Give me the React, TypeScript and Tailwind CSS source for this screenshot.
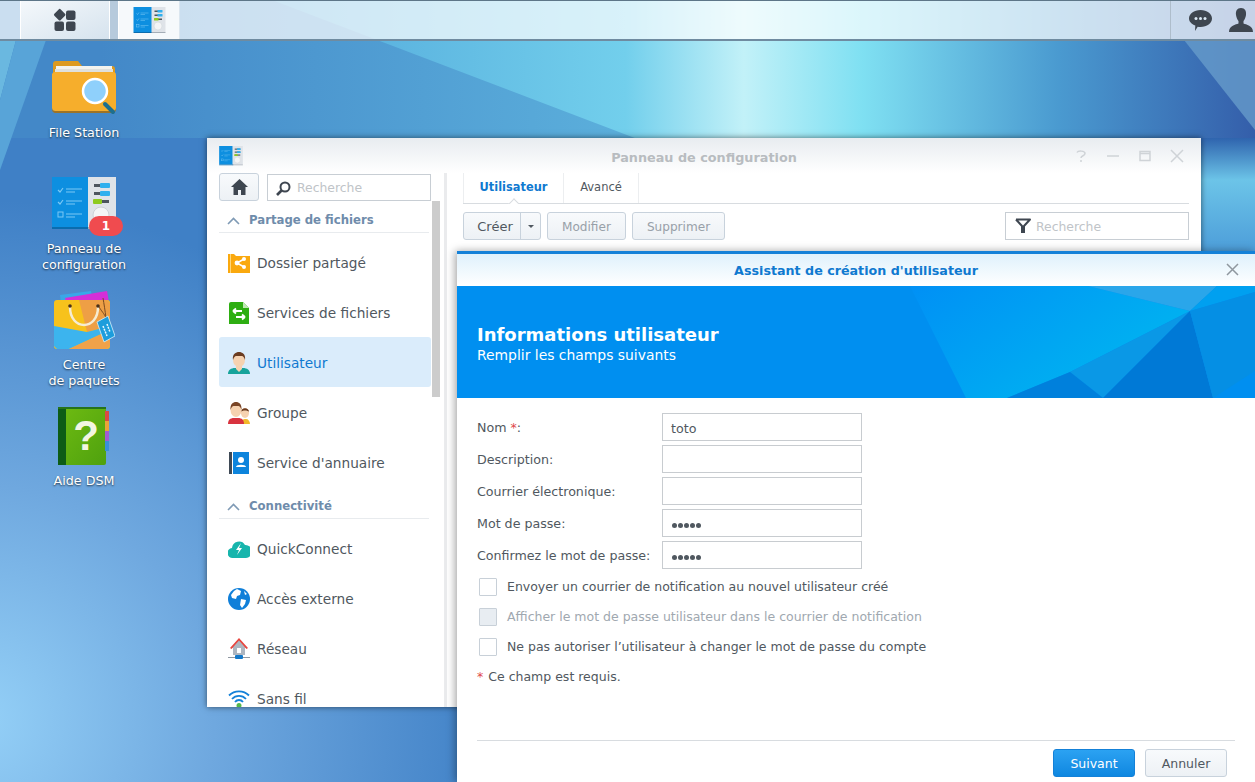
import type { FC, ReactNode } from "react";

const Wallpaper: FC = () => (
  <svg className="absolute inset-0 w-full h-full" viewBox="0 0 1255 782" preserveAspectRatio="none">
    <defs>
      <radialGradient id="wpLeft" gradientUnits="userSpaceOnUse" cx="-20" cy="720" r="520">
        <stop offset="0" stopColor="#94d0f7" />
        <stop offset="0.45" stopColor="#6fa8df" />
        <stop offset="1" stopColor="#3f80c6" />
      </radialGradient>
      <linearGradient id="wpRight" x1="0" y1="0" x2="0" y2="1">
        <stop offset="0" stopColor="#2f64ae" />
        <stop offset="0.35" stopColor="#6cc4e8" />
        <stop offset="1" stopColor="#4a9ad8" />
      </linearGradient>
      <linearGradient id="wpSky" gradientUnits="userSpaceOnUse" x1="272" y1="0" x2="1255" y2="0">
        <stop offset="0" stopColor="#52a8da" />
        <stop offset="0.36" stopColor="#72cfec" />
        <stop offset="0.48" stopColor="#c2f1f8" />
        <stop offset="0.6" stopColor="#7fe0f2" />
        <stop offset="0.8" stopColor="#4a9ad0" />
        <stop offset="1" stopColor="#345eaa" />
      </linearGradient>
      <linearGradient id="wpTop" gradientUnits="userSpaceOnUse" x1="100" y1="0" x2="640" y2="0">
        <stop offset="0" stopColor="#4388c8" />
        <stop offset="1" stopColor="#5cb0dc" />
      </linearGradient>
    </defs>
    <rect width="1255" height="782" fill="url(#wpLeft)" />
    <rect x="0" y="0" width="1255" height="138" fill="url(#wpTop)" />
    <polygon points="272,0 640,140 1255,140 1255,0" fill="url(#wpSky)" />
    <polygon points="0,40 16,40 0,100" fill="#6ab8e0" />
    <polygon points="16,40 46,40 0,170 0,100" fill="#58a4d8" />
    <polygon points="1184,40 1255,40 1255,130" fill="#6a9fcc" opacity="0.75" />
    <rect x="1201" y="138" width="54" height="120" fill="url(#wpRight)" />
  </svg>
);

const DashIcon: FC = () => (
  <svg width="24" height="24" viewBox="0 0 24 24" fill="#3e4650">
    <rect x="2.2" y="2.2" width="9" height="9" rx="1.5" transform="rotate(45 6.7 6.7)" />
    <rect x="13" y="2.5" width="9.5" height="9.5" rx="2" />
    <rect x="1.5" y="13.5" width="9.5" height="9.5" rx="2" />
    <rect x="13" y="13.5" width="9.5" height="9.5" rx="2" />
  </svg>
);

const PanelIcon: FC<{ w: number; h: number }> = ({ w, h }) => (
  <svg width={w} height={h} viewBox="0 0 64 54">
    <rect x="0" y="0" width="38" height="50" fill="#0d8fe0" />
    <rect x="36" y="0" width="28" height="50" fill="#dfe3e8" />
    <rect x="0" y="50" width="38" height="2" fill="#0a6cae" />
    <rect x="36" y="50" width="28" height="2" fill="#a4adb6" />
    <path d="M6 13l2 2 3-4M6 25l2 2 3-4" stroke="#7cc8f4" strokeWidth="1.2" fill="none" />
    <rect x="6" y="35" width="5" height="5" fill="none" stroke="#7cc8f4" strokeWidth="1" />
    <path d="M14 12h16M14 15h9M14 24h16M14 27h9M14 37h16M14 40h9" stroke="#7cc8f4" strokeWidth="1" />
    <rect x="42" y="7" width="15" height="3" fill="#4d555e" />
    <rect x="48" y="6" width="10" height="5" rx="1" fill="#2fb0ee" />
    <rect x="42" y="15" width="15" height="3" fill="#4d555e" />
    <rect x="48" y="14" width="10" height="5" rx="1" fill="#2fb0ee" />
    <rect x="42" y="23" width="15" height="3" fill="#4d555e" />
    <rect x="41" y="22" width="9" height="5" rx="1" fill="#8ecb1e" />
    <circle cx="49" cy="38" r="8" fill="#f4f5f6" stroke="#cdd2d7" />
  </svg>
);

const FolderIcon: FC = () => (
  <svg width="64" height="58" viewBox="0 0 64 58">
    <path d="M1 5a3 3 0 0 1 3-3h22l4 5h30a3 3 0 0 1 3 3v16H1z" fill="#dd9a1f" />
    <rect x="4" y="7" width="56" height="4" fill="#f3f3ee" />
    <rect x="3" y="10" width="58" height="5" fill="#dfe0dc" />
    <path d="M0 15a3 3 0 0 1 3-2l58 0a3 3 0 0 1 3 3v33a3 3 0 0 1-3 3H3a3 3 0 0 1-3-3z" fill="#f6ae2c" />
    <path d="M0 49a3 3 0 0 0 3 3h58a3 3 0 0 0 3-3v1a4 4 0 0 1-3 4H3a4 4 0 0 1-3-4z" fill="#9c7326" />
    <path d="M53 45l8 8" stroke="#1d6f8f" strokeWidth="4" strokeLinecap="round" />
    <circle cx="43" cy="32" r="12" fill="#8fd0fb" stroke="#fff" strokeWidth="2.5" />
  </svg>
);

const BagIcon: FC = () => (
  <svg width="62" height="60" viewBox="0 0 62 60">
    <polygon points="7,5 38,1 40,12 8,14" fill="#3aa7e8" />
    <polygon points="12,8 54,1 56,12 14,14" fill="#d52fd8" />
    <rect x="1" y="10" width="56" height="49" rx="3" fill="#f7c21c" />
    <polygon points="26,10 54,10 57,13 57,36 34,42" fill="#ee9f45" />
    <polygon points="1,36 34,42 57,36 57,40 16,59 4,59 1,56" fill="#3cb4ee" />
    <polygon points="16,59 57,40 57,56 54,59" fill="#f0a24a" />
    <path d="M17 17c0 24 28 24 28 0" fill="none" stroke="#f6ecd2" strokeWidth="2.5" />
    <circle cx="17" cy="16" r="1.800" fill="#4a3018" />
    <circle cx="45" cy="16" r="1.800" fill="#4a3018" />
    <path d="M46 17c4 6 6 8 7 11M50 8c1 6 2 12 3 20" fill="none" stroke="#7a4a20" strokeWidth="1" />
    <polygon points="44,32 55,26 62,46 51,52" fill="#1d9ddc" stroke="#d8f1fb" strokeWidth="0.8" />
    <path d="M50 36l4 10M54 34l3 8" stroke="#e6f6fd" strokeWidth="1.500" strokeDasharray="2 1" />
  </svg>
);

const HelpIcon: FC = () => (
  <svg width="52" height="60" viewBox="0 0 52 60">
    <defs>
      <linearGradient id="book" x1="0" y1="0" x2="1" y2="1">
        <stop offset="0" stopColor="#6fbc12" />
        <stop offset="1" stopColor="#4fa10e" />
      </linearGradient>
    </defs>
    <rect x="0" y="1" width="48" height="58" rx="2" fill="url(#book)" />
    <rect x="0" y="1" width="8" height="58" fill="#0d5c16" />
    <rect x="0" y="1" width="48" height="2" fill="#26731a" />
    <rect x="47" y="5" width="4" height="10" fill="#d94a44" />
    <rect x="47" y="15" width="4" height="10" fill="#e9a33a" />
    <rect x="47" y="25" width="4" height="10" fill="#a35bcf" />
    <rect x="47" y="35" width="4" height="10" fill="#3a8fd8" />
    <text x="28" y="44" textAnchor="middle" fontFamily="Liberation Sans, sans-serif" fontWeight="700" fontSize="42" fill="#f2f6e2">?</text>
  </svg>
);

const DesktopIcon: FC<{ label: ReactNode; children: ReactNode }> = ({ label, children }) => (
  <div className="h-[116px] flex flex-col items-center">
    <div className="relative h-[64px] flex items-center justify-center">{children}</div>
    <div className="mt-[5px] text-center text-[12.7px] leading-[16px] text-white [text-shadow:0_1px_2px_rgba(0,0,0,0.7)]">{label}</div>
  </div>
);

const MenuIcon: FC<{ name: string }> = ({ name }) => {
  switch (name) {
    case "shared":
      return (
        <svg width="22" height="20" viewBox="0 0 22 20">
          <path d="M0 1h6l2 2h14v17H0z" fill="#faa90f" />
          <rect x="2" y="1" width="1" height="19" fill="#ffd67a" />
          <path d="M16 6L9 10l7 4" stroke="#fff" strokeWidth="1.5" fill="none" />
          <circle cx="16" cy="6" r="2" fill="#fff" />
          <circle cx="9" cy="10" r="2.4" fill="#fff" />
          <circle cx="16" cy="14" r="2" fill="#fff" />
        </svg>
      );
    case "files":
      return (
        <svg width="20" height="22" viewBox="0 0 20 22">
          <path d="M2 0h12l6 6v16H0V2a2 2 0 0 1 2-2z" fill="#2eae12" />
          <path d="M14 0l6 6h-6z" fill="#bfe8b2" />
          <path d="M4 9h9M4 9l3-2.5M4 9l3 2.5M16 15H7M16 15l-3-2.5M16 15l-3 2.5" stroke="#fff" strokeWidth="1.8" fill="none" />
        </svg>
      );
    case "user":
      return (
        <svg width="22" height="22" viewBox="0 0 22 22">
          <path d="M0 22c0-4 3-6 7-6h8c4 0 7 2 7 6z" fill="#17a39b" />
          <path d="M8 14h6v3l-3 3-3-3z" fill="#f6d2b0" />
          <ellipse cx="11" cy="8" rx="6" ry="7" fill="#f6d2b0" />
          <path d="M5 8C4 2 8 0 11 0s7 2 6 8c-1-3-2-4-3-4H8C7 4 6 5 5 8z" fill="#6b3c20" />
        </svg>
      );
    case "group":
      return (
        <svg width="22" height="22" viewBox="0 0 22 22">
          <path d="M13 22c0-3 2-5 4-5h1c2 0 4 2 4 5z" fill="#f2b92a" />
          <ellipse cx="17" cy="11" rx="4" ry="5" fill="#f6d2b0" />
          <path d="M13 10c0-5 8-5 8 0-1-2-7-2-8 0z" fill="#6b3c20" />
          <path d="M0 22c0-4 2-6 6-6h4c4 0 6 2 6 6z" fill="#d8333f" />
          <ellipse cx="8" cy="8" rx="5.5" ry="7" fill="#f6d2b0" />
          <path d="M2.5 8C2 2 5 0 8 0s6 2 5.5 8c-1-3-2-4-3-4H5.5C4.500 4 3.500 5 2.500 8z" fill="#7a4526" />
        </svg>
      );
    case "directory":
      return (
        <svg width="20" height="22" viewBox="0 0 20 22">
          <rect width="3" height="22" fill="#3f4a56" />
          <rect x="4" width="16" height="22" fill="#0d84dc" />
          <circle cx="12" cy="8" r="3" fill="#fff" />
          <path d="M7 15c0-3 10-3 10 0z" fill="#fff" />
        </svg>
      );
    case "quick":
      return (
        <svg width="22" height="20" viewBox="0 0 22 20">
          <path d="M5 19a5 5 0 0 1-1-10 7 7 0 0 1 13-3 6.500 6.500 0 0 1 1 13z" fill="#17b5ac" />
          <path d="M13 4l-5 7h3l-2 5 5-7h-3z" fill="#fff" />
        </svg>
      );
    case "external":
      return (
        <svg width="22" height="22" viewBox="0 0 22 22">
          <circle cx="11" cy="11" r="11" fill="#0f7fd9" />
          <path d="M9 1l4 2-1 4-3 1-1 3-4-1-1-3 3-4zM13 11l5 1-1 4-3 4-2-3zM16 3l3 3-2 1z" fill="#fff" />
        </svg>
      );
    case "network":
      return (
        <svg width="22" height="22" viewBox="0 0 22 22">
          <path d="M11 1L3 10h2v7h12v-7h2z" fill="#aeb6c0" />
          <path d="M2 10L11 0l9 10-1.500 1L11 2.500 3.500 11z" fill="#e8463f" />
          <rect x="9" y="10" width="4" height="5" fill="#fff" />
          <rect x="0" y="19" width="22" height="1" fill="#8f98a2" />
          <rect x="7" y="17" width="8" height="4" rx="1" fill="#1479c9" />
        </svg>
      );
    default:
      return (
        <svg width="22" height="18" viewBox="0 0 22 18">
          <path d="M1 5.500a14 14 0 0 1 20 0M4 9a9.500 9.500 0 0 1 14 0M7 12a5 5 0 0 1 8 0" fill="none" stroke="#1481d8" strokeWidth="1.800" />
          <circle cx="11" cy="15.500" r="2.500" fill="#54b84a" />
        </svg>
      );
  }
};

const SectionHeader: FC<{ title: string }> = ({ title }) => (
  <div className="h-[29px] mr-[15px] pt-[5px] flex items-center border-b border-[#e8ebee] text-[11.7px] font-bold text-[#6f8cab]">
    <svg className="ml-[8px] mr-[9px]" width="13" height="8" viewBox="0 0 13 8">
      <path d="M1 7l5.500-5.500L12 7" fill="none" stroke="#7f9ab5" strokeWidth="1.6" />
    </svg>
    {title}
  </div>
);

const MenuItem: FC<{ icon: string; label: string; active?: boolean }> = ({ icon, label, active }) => (
  <div className={`h-[50px] w-[212px] shrink-0 rounded-[3px] pt-[2px] flex items-center text-[13.7px] ${active ? "bg-[#daecfb] text-[#0f79d0]" : "text-[#505860]"}`}>
    <div className="w-[38px] flex justify-center pl-[2px]">
      <MenuIcon name={icon} />
    </div>
    {label}
  </div>
);

const ToolButton: FC<{ label: string }> = ({ label }) => (
  <button className="h-[28px] px-[14px] pt-[2px] rounded-[3px] border border-[#c8d2dc] bg-gradient-to-b from-[#f8fafc] to-[#edf1f5] text-[12.1px] text-[#98a0a8]">
    {label}
  </button>
);

const Sidebar: FC = () => (
  <div className="relative w-[240px] shrink-0 border-r-[3px] border-[#eaebed] pl-[12px] overflow-hidden">
    <div className="flex gap-[8px] h-[31px]">
      <button className="w-[40px] h-[28px] rounded-[3px] border border-[#c8d2dc] bg-gradient-to-b from-[#f8fafc] to-[#edf1f5] flex items-center justify-center">
        <svg width="17" height="16" viewBox="0 0 17 16" fill="#3e4650">
          <path d="M8.500 0L0 8h2.500v8h4.500v-5h3v5h4.500V8H17z" />
        </svg>
      </button>
      <div className="w-[164px] h-[27px] mt-[1px] pt-[2px] border border-[#c8ced4] flex items-center pl-[8px] text-[12.4px] text-[#c0c4c8]">
        <svg className="mr-[6px]" width="15" height="15" viewBox="0 0 15 15" fill="none" stroke="#3e4650" strokeWidth="2">
          <circle cx="9" cy="6" r="4.500" />
          <path d="M5.500 9.500L1 14" strokeWidth="2.600" />
        </svg>
        Recherche
      </div>
    </div>
    <div className="absolute left-[225px] top-[28px] w-[8px] h-[196px] bg-[#cccccc]" />
    <SectionHeader title="Partage de fichiers" />
    <div className="mt-[4px]">
      <MenuItem icon="shared" label="Dossier partagé" />
      <MenuItem icon="files" label="Services de fichiers" />
      <MenuItem icon="user" label="Utilisateur" active />
      <MenuItem icon="group" label="Groupe" />
      <MenuItem icon="directory" label="Service d'annuaire" />
    </div>
    <div className="mt-[3px]">
      <SectionHeader title="Connectivité" />
    </div>
    <div className="mt-[4px]">
      <MenuItem icon="quick" label="QuickConnect" />
      <MenuItem icon="external" label="Accès externe" />
      <MenuItem icon="network" label="Réseau" />
      <MenuItem icon="wifi" label="Sans fil" />
    </div>
  </div>
);

const MainWindow: FC = () => (
  <div className="absolute left-[207px] top-[138px] w-[994px] h-[569px] bg-white flex flex-col overflow-hidden shadow-[0_0_6px_rgba(0,0,0,0.55)]">
    <div className="relative h-[35px] shrink-0 bg-gradient-to-b from-[#e8ecf0] to-white flex items-center justify-center text-[12.8px] font-bold text-[#b8bcc0] pt-[5px]">
      <div className="absolute left-[12px] top-[8px]">
        <PanelIcon w={24} h={20} />
      </div>
      Panneau de configuration
      <div className="absolute right-[17px] top-[11px] flex gap-[18px]">
        <svg width="14" height="14" viewBox="0 0 14 14" fill="none" stroke="#cfd3d7" strokeWidth="1.500">
          <path d="M3 3.500C4 1.500 11 1.500 11 4.500 11 7 7 6.500 7 9M7 11v2" />
        </svg>
        <svg width="14" height="14" viewBox="0 0 14 14" stroke="#cfd3d7" strokeWidth="1.500">
          <path d="M1 7h12" />
        </svg>
        <svg width="14" height="14" viewBox="0 0 14 14" fill="none" stroke="#cfd3d7" strokeWidth="1.500">
          <rect x="2" y="2.500" width="10" height="9" />
          <path d="M2 4.500h10" />
        </svg>
        <svg width="14" height="14" viewBox="0 0 14 14" stroke="#cfd3d7" strokeWidth="1.500">
          <path d="M1 1l12 12M13 1L1 13" />
        </svg>
      </div>
    </div>
    <div className="flex flex-1 min-h-0">
      <Sidebar />
      <div className="flex-1 pl-[16px] pr-[12px]">
        <div className="relative h-[31px] border-b border-[#d8dce0] flex">
          <div className="w-[101px] border-x border-[#eceef0] flex items-center justify-center text-[11.4px] font-bold text-[#0f79d0] pb-[1px]">
            Utilisateur
          </div>
          <div className="w-[75px] border-r border-[#eceef0] flex items-center justify-center text-[11.5px] text-[#505860] pb-[1px]">
            Avancé
          </div>
          <div className="absolute left-[45px] bottom-[-1px] w-[11px] h-[6px] overflow-hidden">
            <div className="w-[8px] h-[8px] mx-auto mt-[2px] rotate-45 bg-white border-l border-t border-[#d8dce0]" />
          </div>
        </div>
        <div className="flex items-center gap-[6px] mt-[8px]">
          <div className="flex h-[28px] rounded-[3px] border border-[#c8d2dc] bg-gradient-to-b from-[#f8fafc] to-[#edf1f5] text-[13px] text-[#505860]">
            <div className="w-[57px] pl-[6px] pt-[2px] flex items-center justify-center border-r border-[#c8d2dc]">Créer</div>
            <div className="w-[19px] flex items-center justify-center">
              <div className="w-0 h-0 border-x-[3px] border-x-transparent border-t-[3px] border-t-[#505860]" />
            </div>
          </div>
          <ToolButton label="Modifier" />
          <ToolButton label="Supprimer" />
          <div className="ml-auto w-[184px] h-[28px] pt-[3px] border border-[#c8ced4] flex items-center pl-[9px] text-[12.4px] text-[#c0c4c8]">
            <svg className="mr-[5px] mb-[3px]" width="16" height="16" viewBox="0 0 16 16" fill="none" stroke="#3e4650" strokeWidth="2">
              <path d="M1 1.500h14L9 8v7M7 15V8L1 1.500" strokeLinejoin="round" />
            </svg>
            Recherche
          </div>
        </div>
      </div>
    </div>
  </div>
);

const FormRow: FC<{ label: ReactNode; value?: ReactNode }> = ({ label, value }) => (
  <div className="h-[28px] flex items-center">
    <div className="w-[185px] pt-[2px] text-[12.65px] text-[#505860]">{label}</div>
    <div className="w-[200px] h-[28px] border border-[#c8ccd0] pl-[8px] pt-[4px] flex items-center text-[12.65px] text-[#505860]">{value}</div>
  </div>
);

const Dots: FC = () => (
  <div className="flex gap-[1px] ml-[1px]">
    {[0, 1, 2, 3, 4].map((i) => (
      <div key={i} className="w-[5px] h-[5px] rounded-full bg-[#505860]" />
    ))}
  </div>
);

const CheckRow: FC<{ label: string; disabled?: boolean }> = ({ label, disabled }) => (
  <div className={`h-[30px] flex items-center pl-[2px] ${disabled ? "text-[#a0a8b0]" : "text-[#505860]"}`}>
    <div className={`w-[18px] h-[18px] mr-[10px] border border-[#c8d0d8] rounded-[1px] ${disabled ? "bg-[#e8edf2]" : "bg-white"}`} />
    {label}
  </div>
);

const Dialog: FC = () => (
  <div className="absolute left-[457px] top-[251px] w-[798px] h-[531px] bg-white flex flex-col border-t-[3px] border-[#1481d8] shadow-[-2px_0_8px_rgba(0,0,0,0.35)]">
    <div className="relative h-[32px] shrink-0 pt-[1px] bg-gradient-to-b from-[#dff1fc] to-white flex items-center justify-center text-[12.7px] font-bold text-[#0f79d0]">
      Assistant de création d'utilisateur
      <svg className="absolute right-[16px] top-[9px]" width="13" height="13" viewBox="0 0 13 13" stroke="#8f979f" strokeWidth="1.500">
        <path d="M1 1l11 11M12 1L1 12" />
      </svg>
    </div>
    <div className="relative h-[112px] shrink-0 bg-[#008ff0] pl-[20px] pt-[38px] overflow-hidden text-white">
      <svg className="absolute inset-0" width="798" height="112" viewBox="0 0 798 112">
        <defs>
          <linearGradient id="ban" x1="0" y1="0" x2="1" y2="0.6">
            <stop offset="0" stopColor="#0090f5" />
            <stop offset="1" stopColor="#00b6f0" />
          </linearGradient>
        </defs>
        <polygon points="453,0 631,0 733,25 613,86 550,112 509,112" fill="url(#ban)" />
        <polygon points="631,0 760,0 733,25" fill="#2aa6ea" />
        <polygon points="760,0 798,0 798,6 733,25" fill="#00a0f0" />
        <polygon points="733,25 613,86 646,112" fill="#0a98e6" />
        <polygon points="613,86 550,112 646,112" fill="#0080dc" />
        <polygon points="733,25 646,112 756,112" fill="#0079d6" />
        <polygon points="733,25 798,6 798,85 756,112" fill="#058fe4" />
      </svg>
      <div className="relative text-[18px] leading-[22px] font-bold">Informations utilisateur</div>
      <div className="relative text-[13.9px] leading-[18px]">Remplir les champs suivants</div>
    </div>
    <div className="flex-1 flex flex-col px-[20px] text-[12.5px]">
      <div className="mt-[15px] flex flex-col gap-[4px]">
        <FormRow label={<>Nom <span className="text-[#e0474c]">*</span>:</>} value="toto" />
        <FormRow label="Description:" />
        <FormRow label="Courrier électronique:" />
        <FormRow label="Mot de passe:" value={<Dots />} />
        <FormRow label="Confirmez le mot de passe:" value={<Dots />} />
      </div>
      <div className="mt-[3px]">
        <CheckRow label="Envoyer un courrier de notification au nouvel utilisateur créé" />
        <CheckRow label="Afficher le mot de passe utilisateur dans le courrier de notification" disabled />
        <CheckRow label="Ne pas autoriser l’utilisateur à changer le mot de passe du compte" />
      </div>
      <div className="h-[30px] flex items-center text-[#505860]">
        <span className="text-[#e0474c] mr-[5px]">*</span>Ce champ est requis.
      </div>
      <div className="mt-auto h-[42px] border-t border-[#d8dce0] flex justify-end gap-[10px] pt-[8px] pr-[8px]">
        <button className="w-[82px] h-[28px] pt-[2px] rounded-[3px] border border-[#1481d8] bg-gradient-to-b from-[#2ba2f2] to-[#0d87e0] text-white">Suivant</button>
        <button className="w-[82px] h-[28px] pt-[2px] rounded-[3px] border border-[#c8d2dc] bg-gradient-to-b from-[#f8fafc] to-[#edf1f5] text-[#505860]">Annuler</button>
      </div>
    </div>
  </div>
);

const TopBar: FC = () => (
  <div className="absolute inset-x-0 top-0 h-[41px] flex bg-white/72 border-t border-[#5d7688] border-b-2 border-b-[#6f8ba0]">
    <div className="w-[21px] border-r border-white" />
    <div className="w-[89px] border-r border-white bg-gradient-to-br from-[#f4f8fb] to-[#d6e3ee] flex items-center justify-center">
      <DashIcon />
    </div>
    <div className="w-[9px] border-r border-white bg-[#b6cadc]" />
    <div className="w-[61px] border-r border-[#dbe6ef] bg-[#f6f9fb] flex items-center justify-center">
      <PanelIcon w={33} h={27} />
    </div>
    <div className="flex-1" />
    <div className="flex items-center border-l border-[#aebdcb] pl-[18px] gap-[17px] w-[85px] overflow-hidden">
      <svg className="shrink-0" width="23" height="23" viewBox="0 0 23 23">
        <path d="M11.500 1C18 1 23 4.800 23 9.500S18 18 11.500 18c-1 0-2 0-2.800-.2L6 22l.3-5.500C2.500 15 0 12.500 0 9.500 0 4.800 5 1 11.500 1z" fill="#3e4650" />
        <circle cx="7" cy="9.500" r="1.500" fill="#dbe9f5" />
        <circle cx="11.500" cy="9.500" r="1.500" fill="#dbe9f5" />
        <circle cx="16" cy="9.500" r="1.500" fill="#dbe9f5" />
      </svg>
      <svg className="shrink-0" width="24" height="24" viewBox="0 0 24 24" fill="#3e4650">
        <path d="M12 0c4 0 5.500 3 5 7-.3 2.500-1.500 5-2.500 6v2.500c2.500 1 9.500 2 9.500 8.500H0c0-6.500 7-7.500 9.500-8.500V13c-1-1-2.200-3.500-2.500-6-.5-4 1-7 5-7z" />
      </svg>
    </div>
  </div>
);

export default function App() {
  return (
    <div className="relative w-[1255px] h-[782px] overflow-hidden font-['DejaVu_Sans',sans-serif]">
      <Wallpaper />
      <TopBar />
      <div className="absolute left-[24px] top-[56px] w-[120px] flex flex-col">
        <DesktopIcon label="File Station">
          <FolderIcon />
        </DesktopIcon>
        <DesktopIcon label={<>Panneau de<br />configuration</>}>
          <PanelIcon w={64} h={54} />
          <div className="absolute left-[37px] top-[44px] w-[34px] h-[20px] rounded-full bg-[#f04b4f] text-white text-[12px] font-bold flex items-center justify-center">1</div>
        </DesktopIcon>
        <DesktopIcon label={<>Centre<br />de paquets</>}>
          <BagIcon />
        </DesktopIcon>
        <DesktopIcon label="Aide DSM">
          <HelpIcon />
        </DesktopIcon>
      </div>
      <MainWindow />
      <Dialog />
    </div>
  );
}
